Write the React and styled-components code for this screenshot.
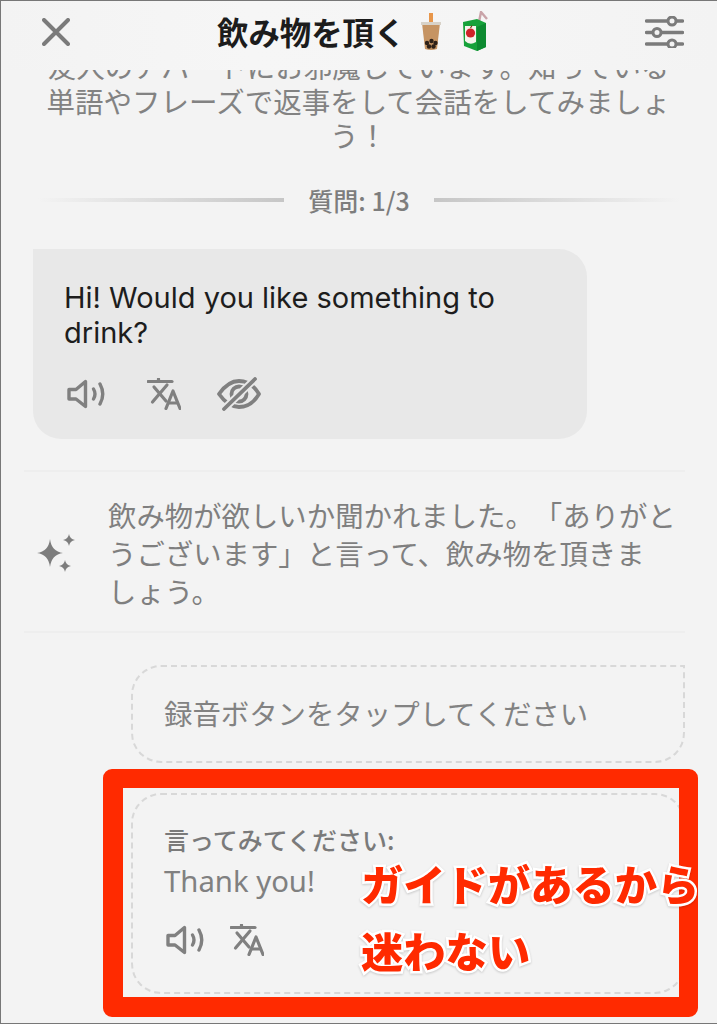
import React from "react";
import styled, { createGlobalStyle } from "styled-components";

const JP = `"Noto Sans CJK JP", "Noto Sans", sans-serif`;
const LATIN = `Inter, "Noto Sans CJK JP", sans-serif`;

const Global = createGlobalStyle`
  html, body { margin: 0; padding: 0; background: #f3f3f3; }
  * { box-sizing: border-box; }
`;

const Frame = styled.div`
  position: relative;
  width: 717px;
  height: 1024px;
  overflow: hidden;
  background: #f3f3f3;
  font-family: ${JP};
  text-spacing-trim: space-all;
  display: flex;
  flex-direction: column;
  &::after {
    content: "";
    position: absolute;
    inset: 0;
    pointer-events: none;
    box-shadow: inset 1px 1px 0 #777, inset 0 -1px 0 #777;
  }
`;

const Header = styled.header`
  position: absolute;
  top: 0;
  left: 0;
  right: 0;
  height: 70px;
  padding: 0 33px 6px 42px;
  display: flex;
  align-items: center;
  justify-content: space-between;
  background: linear-gradient(90deg, #f3f3f3 0%, #f6f6f6 35%, #f5f5f5 70%, #f3f3f3 100%);
`;

const IconButton = styled.span`
  display: flex;
  width: ${(p) => p.$w}px;
  height: ${(p) => p.$h}px;
`;

const Title = styled.h1`
  margin: 0;
  display: flex;
  align-items: center;
  font-size: 31.4px;
  line-height: 40px;
  font-weight: 700;
  color: #1c1c1c;
  white-space: nowrap;
  position: absolute;
  left: 217px;
  top: 11px;
`;

const Emoji = styled.svg`
  flex: none;
  margin-left: ${(p) => p.$ml}px;
`;

const Intro = styled.p`
  margin: 49px 0 0;
  align-self: center;
  width: 640px;
  text-align: center;
  font-size: 28.5px;
  line-height: 34.5px;
  color: #828282;
`;

const QuestionRow = styled.div`
  margin: 33px 37px 0 38px;
  height: 28px;
  display: flex;
  align-items: center;
  gap: 24px;
`;

const FadeLine = styled.div`
  flex: 1;
  height: 4px;
  background: linear-gradient(${(p) => (p.$flip ? "270deg" : "90deg")}, #f3f3f3, #c6c6c6);
`;

const QuestionLabel = styled.span`
  font-size: 25px;
  line-height: 28px;
  font-weight: 500;
  color: #7d7d7d;
  white-space: nowrap;
`;

const Bubble = styled.div`
  margin: 35px 0 0 33px;
  width: 554px;
  height: 190px;
  padding: 31px 31px 0;
  background: #e8e8e8;
  border-radius: 0 28px 28px 28px;
`;

const BubbleText = styled.div`
  font-family: ${LATIN};
  font-size: 29px;
  line-height: 35px;
  color: #1d1d1d;
`;

const IconRow = styled.div`
  display: flex;
  align-items: center;
  gap: ${(p) => p.$gap}px;
  margin-top: ${(p) => p.$top}px;
  margin-left: ${(p) => p.$left}px;
`;

const EyeSlot = styled.span`
  display: flex;
  margin-left: -6px;
`;

const HintRow = styled.div`
  margin: 31px 0 0 24px;
  width: 661px;
  padding: 24px 0 21px 12px;
  display: flex;
  align-items: center;
  gap: 32px;
  border-top: 2px solid #eeeeee;
  border-bottom: 2px solid #eeeeee;
`;

const HintText = styled.p`
  margin: 0;
  font-size: 28.4px;
  line-height: 38px;
  color: #7f7f7f;
  width: 580px;
`;

const KeepTogether = styled.span`
  white-space: nowrap;
`;

const DashedCard = styled.div`
  margin: ${(p) => p.$top}px 0 0 131px;
  width: 554px;
  height: ${(p) => p.$h}px;
  border: 2px dashed #d8d8d8;
  border-radius: ${(p) => (p.$square ? "30px 0 30px 30px" : "30px")};
  padding: ${(p) => p.$pt}px 0 0 31px;
`;

const CardPrompt = styled.div`
  font-size: 28.4px;
  line-height: 40px;
  color: #828282;
`;

const SayLabel = styled.div`
  font-size: 25px;
  line-height: 30px;
  font-weight: 500;
  color: #7a7a7a;
`;

const SayText = styled.div`
  margin-top: 9px;
  font-family: "Noto Sans", sans-serif;
  font-size: 29.3px;
  line-height: 36px;
  color: #808080;
`;

const Callout = styled.div`
  position: absolute;
  left: 103px;
  top: 769px;
  width: 595px;
  height: 248px;
  border-style: solid;
  border-color: #ff2a00;
  border-width: 19px 19px 20px 20px;
  border-radius: 9px;
`;

const Annotation = styled.div`
  position: absolute;
  left: ${(p) => p.$x}px;
  top: ${(p) => p.$y}px;
  font-size: 42.3px;
  line-height: 50px;
  font-weight: 900;
  color: #ff2a00;
  white-space: nowrap;
  -webkit-text-stroke: 5px #ffffff;
  paint-order: stroke fill;
  filter: drop-shadow(0 1px 1px rgba(0, 0, 0, 0.18));
`;

const Speaker = () => (
  <svg width="38" height="30" viewBox="0 0 38 30" fill="none" stroke="#808080" strokeWidth="3.4" strokeLinecap="round" strokeLinejoin="round">
    <path d="M2 10.5 H9 L18.5 2.5 V27.5 L9 20 H2 Z" />
    <path d="M26.5 10 Q29.5 15 26.5 20" />
    <path d="M33 5 Q38.5 15 33 25" />
  </svg>
);

const Translate = () => (
  <svg width="34" height="32" viewBox="0 0 34 32" fill="none" stroke="#808080" strokeWidth="3.2" strokeLinecap="round" strokeLinejoin="round">
    <path d="M1 3.5 H25" />
    <path d="M11.5 1 V3.5" />
    <path d="M7 9 L19 23" />
    <path d="M20 7 L5.5 24" />
    <path d="M19 30.5 L26 13 L33 30.5" />
    <path d="M21.5 25 H30.5" />
  </svg>
);

const EyeOff = () => (
  <svg width="44" height="34" viewBox="0 0 44 34" fill="none" stroke="#808080" strokeWidth="3.8" strokeLinecap="round" strokeLinejoin="round">
    <path d="M2 17 C9 7 15 4 22 4 C29 4 36 7 42 17 C36 27 29 30 22 30 C15 30 9 27 2 17 Z" />
    <circle cx="22" cy="17" r="7.5" />
    <path d="M7 32 L38 2" stroke="#e8e8e8" strokeWidth="7.5" />
    <path d="M7 32 L38 2" />
  </svg>
);

const Sparkles = () => (
  <svg width="40" height="40" viewBox="0 0 40 40" fill="#7d7d7d" style={{ flex: "none" }}>
    <path d="M14 6 Q15.5 18.5 27 20 Q15.5 21.5 14 34 Q12.5 21.5 1 20 Q12.5 18.5 14 6 Z" />
    <path d="M33 1 Q33.8 6.2 39 7 Q33.8 7.8 33 13 Q32.2 7.8 27 7 Q32.2 6.2 33 1 Z" />
    <path d="M29 27 Q29.8 32.2 35 33 Q29.8 33.8 29 39 Q28.2 33.8 23 33 Q28.2 32.2 29 27 Z" />
  </svg>
);

const Boba = () => (
  <Emoji $ml={15} width="22" height="38" viewBox="0 0 22 38">
    <rect x="9" y="0" width="4" height="12" fill="#e8964a" />
    <path d="M2 10 H20 L17 36 Q11 38 5 36 Z" fill="#c69463" />
    <path d="M1 9 H21 V12 H1 Z" fill="#d8d2c8" />
    <g fill="#2d2018">
      <circle cx="7" cy="30" r="2.2" /><circle cx="11.5" cy="28" r="2.2" /><circle cx="15.5" cy="30" r="2.2" />
      <circle cx="9" cy="33.5" r="2.2" /><circle cx="13.5" cy="33.5" r="2.2" />
    </g>
  </Emoji>
);

const Juice = () => (
  <Emoji $ml={20} width="27" height="41" viewBox="0 0 27 41">
    <path d="M17 11 L19 1 L25 8" fill="none" stroke="#c9a3a8" strokeWidth="2.4" />
    <path d="M1 11 L15 8 L24 12 L24 36 L15 40 L2 35 Z" fill="#16a23a" />
    <path d="M15 16 L24 12 V36 L15 40 Z" fill="#0d8a30" />
    <path d="M3 15 H14 V31 Q8 35 3 30 Z" fill="#f4f4ec" />
    <circle cx="8.5" cy="22" r="4.6" fill="#cf2329" />
    <path d="M8.5 17 L10 14.5" stroke="#6a3b12" strokeWidth="1.2" />
  </Emoji>
);

export default function App() {
  return (
    <Frame>
      <Global />
      <Intro>
        友人のアパートにお邪魔しています。知っている単語やフレーズで返事をして会話をしてみましょう！
      </Intro>

      <QuestionRow>
        <FadeLine />
        <QuestionLabel>質問: 1/3</QuestionLabel>
        <FadeLine $flip />
      </QuestionRow>

      <Bubble>
        <BubbleText>Hi! Would you like something to drink?</BubbleText>
        <IconRow $gap={42} $top={27} $left={3}>
          <Speaker />
          <Translate />
          <EyeSlot><EyeOff /></EyeSlot>
        </IconRow>
      </Bubble>

      <HintRow>
        <Sparkles />
        <HintText>
          飲み物が欲しいか聞かれました。「ありがとうございます」と言って、飲み物を頂きま<KeepTogether>しょ</KeepTogether>う。
        </HintText>
      </HintRow>

      <DashedCard $top={32} $h={98} $pt={26} $square>
        <CardPrompt>録音ボタンをタップしてください</CardPrompt>
      </DashedCard>

      <DashedCard $top={30} $h={201} $pt={29}>
        <SayLabel>言ってみてください:</SayLabel>
        <SayText>Thank you!</SayText>
        <IconRow $gap={26} $top={25} $left={2}>
          <Speaker />
          <Translate />
        </IconRow>
      </DashedCard>

      <Header>
        <IconButton $w={28} $h={28}>
          <svg width="28" height="28" viewBox="0 0 28 28" stroke="#7b7b7b" strokeWidth="4" strokeLinecap="round">
            <path d="M2 2 L26 26 M26 2 L2 26" />
          </svg>
        </IconButton>
        <Title>
          飲み物を頂く
          <Boba />
          <Juice />
        </Title>
        <IconButton $w={39} $h={32}>
          <svg width="39" height="32" viewBox="0 0 39 32" fill="none" stroke="#7b7b7b" strokeWidth="3.4" strokeLinecap="round">
            <path d="M1.5 5 H37.5 M1.5 16.5 H37.5 M1.5 28 H37.5" />
            <circle cx="27" cy="5" r="4" fill="#f3f3f3" strokeWidth="3" />
            <circle cx="12" cy="16.5" r="4" fill="#f3f3f3" strokeWidth="3" />
            <circle cx="27" cy="28" r="4" fill="#f3f3f3" strokeWidth="3" />
          </svg>
        </IconButton>
      </Header>

      <Callout />
      <Annotation $x={361} $y={858}>ガイドがあるから</Annotation>
      <Annotation $x={361} $y={925}>迷わない</Annotation>
    </Frame>
  );
}
